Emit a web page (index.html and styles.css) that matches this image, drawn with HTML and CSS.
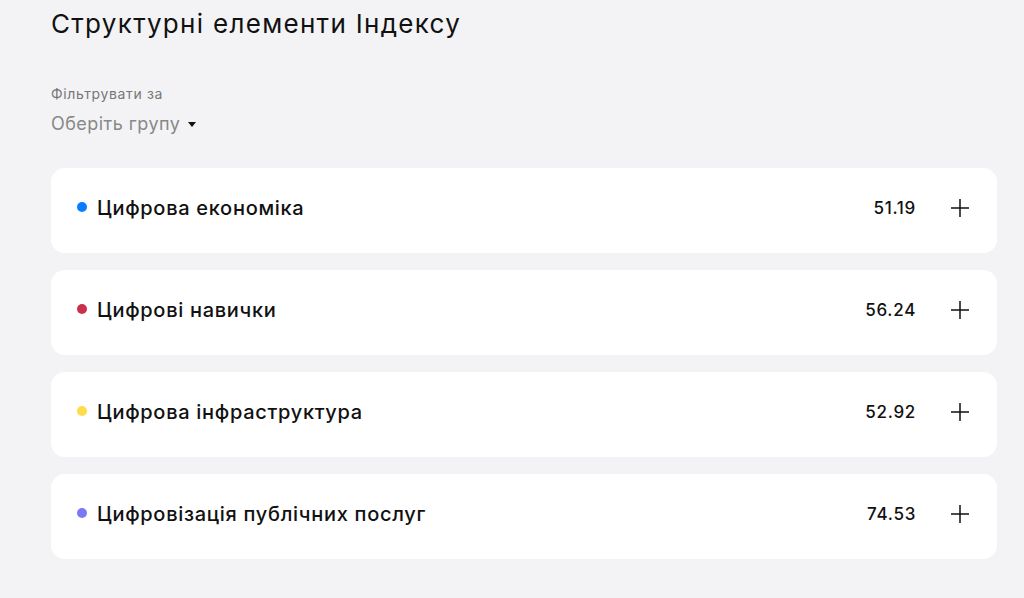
FILE: index.html
```html
<!DOCTYPE html>
<html lang="uk">

<head>
    <meta charset="UTF-8">
    <meta name="viewport" content="width=device-width, initial-scale=1.0">
    <title>Структурні елементи Індексу</title>
    <link rel="stylesheet" href="styles.css">
</head>

<body>
    <div class="container">
        <h2 class="title">Структурні елементи Індексу</h2>

        <div class="filter">
            <div class="filter-label">Фільтрувати за</div>
            <div class="filter-select">Оберіть групу <span class="caret"></span></div>
        </div>

        <div class="list">
            <div class="item">
                <span class="dot dot-blue"></span>
                <span class="name">Цифрова економіка</span>
                <span class="value">51.19</span>
                <svg class="plus" width="18" height="18" viewBox="0 0 18 18"><path d="M9 0v18M0 9h18" stroke="#111" stroke-width="1.5" fill="none"/></svg>
            </div>
            <div class="item">
                <span class="dot dot-red"></span>
                <span class="name">Цифрові навички</span>
                <span class="value">56.24</span>
                <svg class="plus" width="18" height="18" viewBox="0 0 18 18"><path d="M9 0v18M0 9h18" stroke="#111" stroke-width="1.5" fill="none"/></svg>
            </div>
            <div class="item">
                <span class="dot dot-yellow"></span>
                <span class="name">Цифрова інфраструктура</span>
                <span class="value">52.92</span>
                <svg class="plus" width="18" height="18" viewBox="0 0 18 18"><path d="M9 0v18M0 9h18" stroke="#111" stroke-width="1.5" fill="none"/></svg>
            </div>
            <div class="item">
                <span class="dot dot-purple"></span>
                <span class="name">Цифровізація публічних послуг</span>
                <span class="value">74.53</span>
                <svg class="plus" width="18" height="18" viewBox="0 0 18 18"><path d="M9 0v18M0 9h18" stroke="#111" stroke-width="1.5" fill="none"/></svg>
            </div>
        </div>
    </div>
</body>

</html>
```

FILE: styles.css
```css
body {
    background-color: #f3f3f5;
    color: #111111;
    font-family: Inter, "Liberation Sans", Arial, sans-serif;
    margin: 0;
    padding: 0;
}

.container {
    padding: 7px 27px 0 51px;
}

.title {
    margin: 0;
    font-size: 26px;
    font-weight: normal;
    line-height: 34px;
    letter-spacing: 1.3px;
    color: #111111;
}

.filter {
    margin-top: 44px;
}

.filter-label {
    font-size: 14px;
    color: #777777;
    line-height: 18px;
    letter-spacing: 0.65px;
}

.filter-select {
    margin-top: 10px;
    font-size: 18px;
    color: #888888;
    line-height: 22px;
    letter-spacing: 0.45px;
    display: flex;
    align-items: center;
}

.caret {
    display: inline-block;
    margin-left: 8px;
    width: 0;
    height: 0;
    border-left: 4px solid transparent;
    border-right: 4px solid transparent;
    border-top: 5px solid #111111;
}

.list {
    margin-top: 33px;
    display: flex;
    flex-direction: column;
    gap: 17px;
}

.item {
    background-color: #ffffff;
    border-radius: 14px;
    height: 85px;
    box-sizing: border-box;
    display: flex;
    align-items: center;
    padding: 0 28px 5px 26px;
}

.dot {
    width: 10px;
    height: 10px;
    border-radius: 50%;
    margin: 0 10px 2px 0;
}

.dot-blue { background-color: #0a7cff; }
.dot-red { background-color: #c9304b; }
.dot-yellow { background-color: #ffdc4a; }
.dot-purple { background-color: #7b78f5; }

.name {
    flex: 1;
    font-size: 20px;
    font-weight: 500;
    letter-spacing: 0.7px;
}

.value {
    font-size: 17px;
    font-weight: 500;
    letter-spacing: 0.7px;
}

.plus {
    margin-left: 35px;
}
```
